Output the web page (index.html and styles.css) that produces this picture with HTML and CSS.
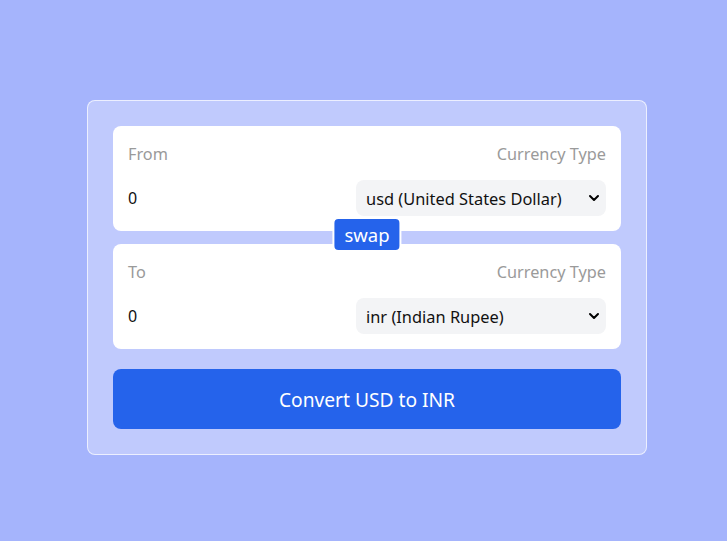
FILE: index.html
```html
<!DOCTYPE html>
<html lang="en">
<head>
<meta charset="utf-8">
<title>Currency Converter</title>
<link rel="stylesheet" href="styles.css">
</head>
<body>
<main class="page">
  <form class="card">
    <div class="fields">
      <div class="box">
        <div class="box-row">
          <label class="label">From</label>
          <span class="label">Currency Type</span>
        </div>
        <div class="box-row">
          <input class="amount" type="text" value="0">
          <button type="button" class="select">
            <span>usd (United States Dollar)</span>
            <svg width="12" height="12" viewBox="0 0 12 12"><path d="M2 4l4 4 4-4" fill="none" stroke="#000" stroke-width="2" stroke-linecap="round" stroke-linejoin="round"/></svg>
          </button>
        </div>
      </div>
      <button type="button" class="swap">swap</button>
      <div class="box">
        <div class="box-row">
          <label class="label">To</label>
          <span class="label">Currency Type</span>
        </div>
        <div class="box-row">
          <input class="amount" type="text" value="0">
          <button type="button" class="select">
            <span>inr (Indian Rupee)</span>
            <svg width="12" height="12" viewBox="0 0 12 12"><path d="M2 4l4 4 4-4" fill="none" stroke="#000" stroke-width="2" stroke-linecap="round" stroke-linejoin="round"/></svg>
          </button>
        </div>
      </div>
    </div>
    <button type="button" class="convert">Convert USD to INR</button>
  </form>
</main>
</body>
</html>
```
FILE: styles.css
```css
* { box-sizing: border-box; }
html, body { margin: 0; height: 100%; }
body {
  background: #a5b4fc;
  font-family: "Noto Sans", "Open Sans", sans-serif;
  font-size: 16px;
}
.page {
  display: flex;
  justify-content: center;
  padding-top: 100px;
  padding-left: 7px;
}
.card {
  width: 560px;
  padding: 25px;
  border: 1px solid rgba(255,255,255,0.7);
  border-radius: 8px;
  background: rgba(255,255,255,0.3);
  display: flex;
  flex-direction: column;
  gap: 20px;
}
.fields {
  position: relative;
  display: flex;
  flex-direction: column;
  gap: 13px;
}
.box {
  background: #fff;
  border-radius: 8px;
  height: 105px;
  padding: 16px 15px 15px 15px;
  display: flex;
  flex-direction: column;
  gap: 14px;
}
.box-row {
  display: flex;
  justify-content: space-between;
  align-items: center;
}
.label {
  color: #9a9a9a;
  font-size: 16.3px;
  line-height: 24px;
}
.amount {
  border: 0;
  outline: 0;
  font: inherit;
  font-size: 16px;
  color: #111;
  padding: 0;
  width: 150px;
  background: transparent;
}
.select {
  width: 250px;
  height: 36px;
  background: #f3f4f6;
  border: 0;
  border-radius: 8px;
  display: flex;
  align-items: center;
  justify-content: space-between;
  padding: 0 6px 0 10px;
  font: inherit;
  font-size: 16.4px;
  color: #111;
}
.swap {
  position: absolute;
  left: 50%;
  top: 91px;
  transform: translateX(-50%);
  background: #2563eb;
  color: #fff;
  border: 2px solid #fff;
  border-radius: 6px;
  font: inherit;
  font-size: 18.5px;
  line-height: 27px;
  padding: 2px 10px 2px;
}
.convert {
  height: 60px;
  background: #2563eb;
  color: #fff;
  border: 0;
  border-radius: 8px;
  font: inherit;
  font-size: 19.2px;
}
```
